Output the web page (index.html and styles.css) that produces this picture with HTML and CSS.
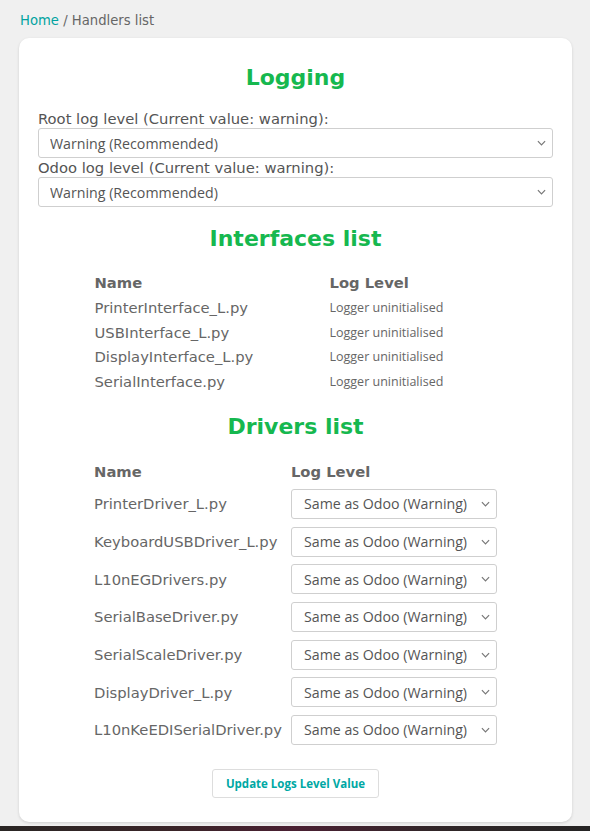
FILE: index.html
```html
<!DOCTYPE html>
<html lang="en">
<head>
<meta charset="utf-8">
<title>Handlers list</title>
<link rel="stylesheet" href="styles.css">
</head>
<body>
<div class="page">
  <div class="breadcrumb"><a class="crumb-link" href="#">Home</a> / Handlers list</div>
  <div class="card">
    <h2 class="title title-first">Logging</h2>
    <div class="field">
      <label class="field-label">Root log level (Current value: warning):</label>
      <div class="select-wrap">
        <select class="select"><option>Warning (Recommended)</option></select>
        <svg class="chev" viewBox="0 0 10 6" width="9" height="6"><path d="M1 1l4 4 4-4" fill="none" stroke="#777" stroke-width="1.3"/></svg>
      </div>
    </div>
    <div class="field">
      <label class="field-label">Odoo log level (Current value: warning):</label>
      <div class="select-wrap">
        <select class="select"><option>Warning (Recommended)</option></select>
        <svg class="chev" viewBox="0 0 10 6" width="9" height="6"><path d="M1 1l4 4 4-4" fill="none" stroke="#777" stroke-width="1.3"/></svg>
      </div>
    </div>

    <h2 class="title">Interfaces list</h2>
    <table class="tbl tbl-if">
      <thead><tr><th class="c1">Name</th><th>Log Level</th></tr></thead>
      <tbody>
        <tr><td class="c1">PrinterInterface_L.py</td><td class="small">Logger uninitialised</td></tr>
        <tr><td class="c1">USBInterface_L.py</td><td class="small">Logger uninitialised</td></tr>
        <tr><td class="c1">DisplayInterface_L.py</td><td class="small">Logger uninitialised</td></tr>
        <tr><td class="c1">SerialInterface.py</td><td class="small">Logger uninitialised</td></tr>
      </tbody>
    </table>

    <h2 class="title">Drivers list</h2>
    <table class="tbl tbl-dr">
      <thead><tr><th class="c1">Name</th><th>Log Level</th></tr></thead>
      <tbody>
        <tr><td class="c1">PrinterDriver_L.py</td><td><div class="select-wrap"><select class="select"><option>Same as Odoo (Warning)</option></select><svg class="chev" viewBox="0 0 10 6" width="9" height="6"><path d="M1 1l4 4 4-4" fill="none" stroke="#777" stroke-width="1.3"/></svg></div></td></tr>
        <tr><td class="c1">KeyboardUSBDriver_L.py</td><td><div class="select-wrap"><select class="select"><option>Same as Odoo (Warning)</option></select><svg class="chev" viewBox="0 0 10 6" width="9" height="6"><path d="M1 1l4 4 4-4" fill="none" stroke="#777" stroke-width="1.3"/></svg></div></td></tr>
        <tr><td class="c1">L10nEGDrivers.py</td><td><div class="select-wrap"><select class="select"><option>Same as Odoo (Warning)</option></select><svg class="chev" viewBox="0 0 10 6" width="9" height="6"><path d="M1 1l4 4 4-4" fill="none" stroke="#777" stroke-width="1.3"/></svg></div></td></tr>
        <tr><td class="c1">SerialBaseDriver.py</td><td><div class="select-wrap"><select class="select"><option>Same as Odoo (Warning)</option></select><svg class="chev" viewBox="0 0 10 6" width="9" height="6"><path d="M1 1l4 4 4-4" fill="none" stroke="#777" stroke-width="1.3"/></svg></div></td></tr>
        <tr><td class="c1">SerialScaleDriver.py</td><td><div class="select-wrap"><select class="select"><option>Same as Odoo (Warning)</option></select><svg class="chev" viewBox="0 0 10 6" width="9" height="6"><path d="M1 1l4 4 4-4" fill="none" stroke="#777" stroke-width="1.3"/></svg></div></td></tr>
        <tr><td class="c1">DisplayDriver_L.py</td><td><div class="select-wrap"><select class="select"><option>Same as Odoo (Warning)</option></select><svg class="chev" viewBox="0 0 10 6" width="9" height="6"><path d="M1 1l4 4 4-4" fill="none" stroke="#777" stroke-width="1.3"/></svg></div></td></tr>
        <tr><td class="c1">L10nKeEDISerialDriver.py</td><td><div class="select-wrap"><select class="select"><option>Same as Odoo (Warning)</option></select><svg class="chev" viewBox="0 0 10 6" width="9" height="6"><path d="M1 1l4 4 4-4" fill="none" stroke="#777" stroke-width="1.3"/></svg></div></td></tr>
      </tbody>
    </table>

    <div class="actions"><button class="btn" type="button">Update Logs Level Value</button></div>
  </div>
  <div class="desktop-strip"></div>
</div>
</body>
</html>
```

FILE: styles.css
```css
html, body {
  margin: 0;
  padding: 0;
  background: #f0f0f0;
}
body {
  font-family: "DejaVu Sans", sans-serif;
  color: #666;
  overflow: hidden;
  height: 831px;
}
.page {
  display: flex;
  flex-direction: column;
}
.breadcrumb {
  padding: 12px 20px 0;
  font-size: 13.2px;
  line-height: 17px;
  height: 17px;
  color: #666;
}
.crumb-link {
  color: #00a3a0;
  text-decoration: none;
}
.card {
  margin: 9px 18px 0 19px;
  width: 553px;
  box-sizing: border-box;
  background: #fff;
  border-radius: 10px;
  box-shadow: 0 1px 3px rgba(0,0,0,0.14);
  padding: 8px 19px 24px;
}
.title {
  margin: 19px 0;
  text-align: center;
  font-size: 22px;
  line-height: 26px;
  font-weight: bold;
  color: #16b84f;
}
.title-first {
  margin-top: 19px;
}
.field-label {
  display: block;
  font-size: 14.75px;
  line-height: 17px;
  color: #555;
  margin-top: 1px;
}
.field .select-wrap {
  margin-top: 1px;
}
.select-wrap {
  position: relative;
}
.select {
  appearance: none;
  -webkit-appearance: none;
  display: block;
  width: 100%;
  height: 30px;
  box-sizing: border-box;
  border: 1px solid #cfcfcf;
  border-radius: 3px;
  background: #fff;
  padding: 0 11px;
  font-family: "Open Sans", sans-serif;
  font-size: 14.2px;
  color: #555;
}
.chev {
  position: absolute;
  right: 7px;
  top: 12px;
}
.tbl {
  margin: 0 auto;
  width: 402px;
  border-collapse: collapse;
}
.tbl th, .tbl td {
  padding: 0;
  text-align: left;
  vertical-align: middle;
}
.tbl th {
  font-size: 14.75px;
  font-weight: bold;
  color: #666;
}
.tbl-if th, .tbl-if td {
  line-height: 16.8px;
  padding: 4px 0;
  font-size: 14.75px;
}
.tbl-if .c1 {
  width: 235px;
}
.tbl-if td.small {
  font-family: "Open Sans", sans-serif;
  font-size: 12.5px;
  color: #666;
}
.tbl-dr th {
  height: 26px;
  line-height: 17px;
}
.tbl-dr td {
  height: 37.7px;
  font-size: 14.75px;
}
.tbl-dr .c1 {
  padding-right: 9px;
  white-space: nowrap;
}
.tbl-dr .select {
  width: 206px;
  padding: 0 12px;
  font-size: 14.2px;
}
.actions {
  display: flex;
  justify-content: center;
  margin-top: 20px;
}
.btn {
  width: 167px;
  height: 29px;
  background: #fff;
  border: 1px solid #ddd;
  border-radius: 3px;
  color: #00a8a4;
  font-family: "Open Sans", sans-serif;
  font-weight: bold;
  font-size: 11.5px;
}
.desktop-strip {
  margin-top: 4px;
  height: 10px;
  background: linear-gradient(90deg, #2a2624 0%, #3a2428 30%, #4a2032 50%, #302628 75%, #262424 100%);
}
```
